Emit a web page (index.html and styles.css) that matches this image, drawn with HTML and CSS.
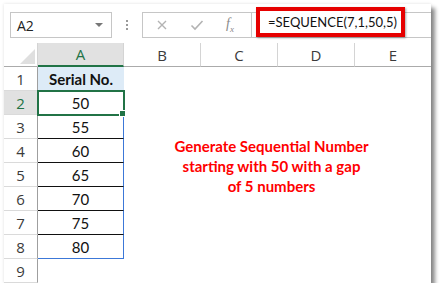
FILE: index.html
```html
<!DOCTYPE html>
<html>
<head>
    <meta charset="UTF-8">
    <title>SEQUENCE example</title>
    <link rel="stylesheet" href="styles.css">
</head>
<body>
    <div class="window">
        <div class="formula-bar">
            <div class="name-box">
                <span class="name-text">A2</span>
                <span class="name-arrow"></span>
            </div>
            <div class="grip">
                <span></span><span></span><span></span>
            </div>
            <div class="fx-buttons">
                <svg class="btn-icon" width="12" height="12" viewBox="0 0 12 12">
                    <path d="M2 2 L10 10 M10 2 L2 10" stroke="#b3b3b3" stroke-width="1.4" fill="none"/>
                </svg>
                <svg class="btn-icon" width="14" height="12" viewBox="0 0 14 12">
                    <path d="M1.5 6.5 L5 10 L12.5 2" stroke="#b3b3b3" stroke-width="1.6" fill="none"/>
                </svg>
                <span class="fx-label">f<sub>x</sub></span>
            </div>
            <div class="formula-input">
                <div class="formula-highlight">=SEQUENCE(7,1,50,5)</div>
            </div>
        </div>

        <div class="sheet">
            <div class="corner"><span class="corner-tri"></span></div>
            <div class="col-head active">A</div>
            <div class="col-head">B</div>
            <div class="col-head">C</div>
            <div class="col-head">D</div>
            <div class="col-head last">E</div>

            <div class="row-head">1</div>
            <div class="cell title">Serial No.</div>

            <div class="row-head active">2</div>
            <div class="cell data selected">50</div>

            <div class="row-head">3</div>
            <div class="cell data">55</div>

            <div class="row-head">4</div>
            <div class="cell data">60</div>

            <div class="row-head">5</div>
            <div class="cell data">65</div>

            <div class="row-head">6</div>
            <div class="cell data">70</div>

            <div class="row-head">7</div>
            <div class="cell data">75</div>

            <div class="row-head">8</div>
            <div class="cell data spill-end">80</div>

            <div class="row-head">9</div>
            <div class="cell empty"></div>

            <div class="free-area">
                <p class="note">Generate Sequential Number<br>starting with 50 with a gap<br>of 5 numbers</p>
            </div>
        </div>
    </div>
</body>
</html>
```

FILE: styles.css
```css
body {
    margin: 0;
    background-color: #ffffff;
    font-family: "Open Sans", "Noto Sans", sans-serif;
}
.window {
    width: 427px;
    height: 279px;
    margin: 4px 0 0 4px;
    background-color: #ffffff;
    box-shadow: 0 0 3px rgba(0, 0, 0, 0.12), 4px 4px 4px rgba(0, 0, 0, 0.45);
    overflow: hidden;
}
.formula-bar {
    display: flex;
    align-items: center;
    height: 39px;
    padding-left: 6px;
}
.name-box {
    display: flex;
    align-items: center;
    justify-content: space-between;
    box-sizing: border-box;
    width: 102px;
    height: 26px;
    margin-top: 3px;
    padding: 0 8px 0 6px;
    border: 1px solid #c6c6c6;
    font-size: 14px;
    color: #222;
}
.name-arrow {
    width: 0;
    height: 0;
    border-left: 4px solid transparent;
    border-right: 4px solid transparent;
    border-top: 4px solid #777;
}
.grip {
    display: flex;
    flex-direction: column;
    gap: 2px;
    width: 30px;
    align-items: center;
    margin-top: 3px;
}
.grip span {
    width: 2px;
    height: 2px;
    background-color: #9a9a9a;
}
.fx-buttons {
    display: flex;
    align-items: center;
    box-sizing: border-box;
    width: 109px;
    height: 26px;
    margin-top: 3px;
    padding-left: 13px;
    gap: 22px;
    border: 1px solid #c6c6c6;
    border-right: none;
}
.fx-label {
    font-family: "Liberation Serif", serif;
    font-style: italic;
    font-size: 14px;
    color: #8a8a8a;
}
.fx-label sub {
    font-size: 9px;
}
.formula-input {
    flex: 1;
    box-sizing: border-box;
    height: 26px;
    margin-top: 3px;
    border: 1px solid #c6c6c6;
    border-right: none;
    padding-left: 4px;
}
.formula-highlight {
    box-sizing: border-box;
    width: 149px;
    height: 30px;
    margin-top: -6px;
    border: 4px solid #e60000;
    box-shadow: 1px 1px 2px rgba(0, 0, 0, 0.35);
    padding: 3px 0 0 8px;
    font-family: "Lato", sans-serif;
    font-size: 13px;
    color: #111;
    white-space: nowrap;
    background-color: #fff;
}

.sheet {
    display: grid;
    grid-template-columns: 34px 86px 77px 77px 77px 76px;
    grid-template-rows: repeat(10, 24px);
}
.corner {
    position: relative;
    border-right: 1px solid #d4d4d4;
    border-bottom: 1px solid #ababab;
}
.corner-tri {
    position: absolute;
    right: 2px;
    bottom: 2px;
    width: 0;
    height: 0;
    border-left: 15px solid transparent;
    border-bottom: 15px solid #dfdfdf;
}
.col-head {
    display: flex;
    align-items: center;
    justify-content: center;
    border-right: 1px solid #d4d4d4;
    border-bottom: 1px solid #ababab;
    font-size: 15px;
    color: #3b3b3b;
}
.col-head.last {
    border-right: none;
}
.col-head.active {
    background-color: #e1e1e1;
    color: #217346;
    border-bottom: 2px solid #217346;
}
.row-head {
    grid-column: 1;
    display: flex;
    align-items: center;
    justify-content: center;
    border-right: 1px solid #9f9f9f;
    border-bottom: 1px solid #dadada;
    font-size: 15px;
    color: #3b3b3b;
}
.row-head.active {
    background-color: #e1e1e1;
    color: #217346;
}
.cell {
    grid-column: 2;
    display: flex;
    align-items: center;
    justify-content: center;
    font-family: "Lato", sans-serif;
    font-size: 15px;
    color: #111;
}
.cell.title {
    background-color: #ddebf7;
    font-weight: bold;
    border-bottom: 1px solid #111;
}
.cell.data {
    border-bottom: 1px solid #111;
    border-right: 1px solid #3c78d8;
}
.cell.spill-end {
    border-bottom: 1px solid #3c78d8;
}
.cell.selected {
    position: relative;
    outline: 2px solid #217346;
    outline-offset: -1px;
}
.cell.selected::after {
    content: "";
    position: absolute;
    right: -3px;
    bottom: -3px;
    width: 5px;
    height: 5px;
    background-color: #217346;
    border: 1px solid #fff;
}
.free-area {
    grid-column: 3 / 7;
    grid-row: 2 / 11;
    display: flex;
    justify-content: center;
    padding-right: 12px;
}
.note {
    margin: 69px 0 0 0;
    font-family: "Lato", sans-serif;
    font-weight: bold;
    font-size: 15px;
    line-height: 20px;
    color: #ff0000;
    text-align: center;
}
```
